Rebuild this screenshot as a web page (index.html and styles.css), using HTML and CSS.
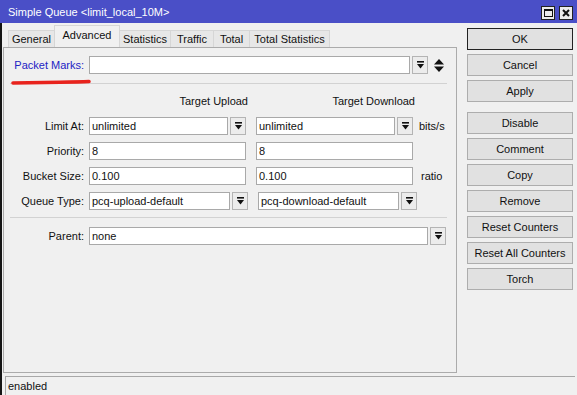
FILE: index.html
```html
<!DOCTYPE html>
<html lang="en">
<head>
    <meta charset="UTF-8">
    <title>Simple Queue</title>
    <link rel="stylesheet" href="styles.css">
</head>
<body>
<div class="window">
    <div class="titlebar">
        <span class="title">Simple Queue &lt;limit_local_10M&gt;</span>
        <div class="wincontrols">
            <span class="wbtn">
                <svg width="9" height="8" viewBox="0 0 9 8"><rect x="0.5" y="0.5" width="8" height="7" fill="none" stroke="#111"/><rect x="0" y="0" width="9" height="2" fill="#111"/></svg>
            </span>
            <span class="wbtn">
                <svg width="8" height="8" viewBox="0 0 8 8"><path d="M1 1 L7 7 M7 1 L1 7" stroke="#111" stroke-width="2"/></svg>
            </span>
        </div>
    </div>

    <div class="frame">
        <div class="main">
            <div class="left">
                <!-- tabs -->
                <div class="tabs">
                    <div class="tab t-general">General</div>
                    <div class="tab active t-advanced">Advanced</div>
                    <div class="tab t-stats">Statistics</div>
                    <div class="tab t-traffic">Traffic</div>
                    <div class="tab t-total">Total</div>
                    <div class="tab t-totalstats">Total Statistics</div>
                </div>

                <div class="panel">
                    <div class="row first">
                        <span class="label link">Packet Marks:</span>
                        <div class="input marks"></div>
                        <span class="dd"><svg width="7" height="8" viewBox="0 0 7 8"><rect x="0" y="0" width="7" height="1.6" fill="#111"/><polygon points="0,3 7,3 3.5,7.5" fill="#111"/></svg></span>
                        <span class="updown"><svg width="10" height="15" viewBox="0 0 10 15"><polygon points="0,6.5 10,6.5 5,1" fill="#111"/><polygon points="0,8.5 10,8.5 5,14" fill="#111"/></svg></span>
                    </div>
                    <svg class="scribble" width="82" height="8" viewBox="0 0 82 8"><path d="M3 5 Q 30 4.5 50 4.2 T 79 3.5" fill="none" stroke="#e8231d" stroke-width="3.6" stroke-linecap="round"/></svg>
                    <div class="sep"></div>

                    <div class="heads">
                        <span class="head">Target Upload</span>
                        <span class="head">Target Download</span>
                    </div>

                    <div class="row">
                        <span class="label">Limit At:</span>
                        <div class="combo">
                            <div class="input">unlimited</div>
                            <span class="dd"><svg width="7" height="8" viewBox="0 0 7 8"><rect x="0" y="0" width="7" height="1.6" fill="#111"/><polygon points="0,3 7,3 3.5,7.5" fill="#111"/></svg></span>
                        </div>
                        <div class="combo">
                            <div class="input">unlimited</div>
                            <span class="dd"><svg width="7" height="8" viewBox="0 0 7 8"><rect x="0" y="0" width="7" height="1.6" fill="#111"/><polygon points="0,3 7,3 3.5,7.5" fill="#111"/></svg></span>
                        </div>
                        <span class="unit">bits/s</span>
                    </div>

                    <div class="row">
                        <span class="label">Priority:</span>
                        <div class="input col">8</div>
                        <div class="input col">8</div>
                    </div>

                    <div class="row">
                        <span class="label">Bucket Size:</span>
                        <div class="input col">0.100</div>
                        <div class="input col">0.100</div>
                        <span class="unit ratio">ratio</span>
                    </div>

                    <div class="row qtype">
                        <span class="label">Queue Type:</span>
                        <div class="combo">
                            <div class="input">pcq-upload-default</div>
                            <span class="dd"><svg width="7" height="8" viewBox="0 0 7 8"><rect x="0" y="0" width="7" height="1.6" fill="#111"/><polygon points="0,3 7,3 3.5,7.5" fill="#111"/></svg></span>
                        </div>
                        <div class="combo">
                            <div class="input">pcq-download-default</div>
                            <span class="dd"><svg width="7" height="8" viewBox="0 0 7 8"><rect x="0" y="0" width="7" height="1.6" fill="#111"/><polygon points="0,3 7,3 3.5,7.5" fill="#111"/></svg></span>
                        </div>
                    </div>

                    <div class="sep sep2"></div>

                    <div class="row parent">
                        <span class="label">Parent:</span>
                        <div class="combo wide">
                            <div class="input">none</div>
                            <span class="dd"><svg width="7" height="8" viewBox="0 0 7 8"><rect x="0" y="0" width="7" height="1.6" fill="#111"/><polygon points="0,3 7,3 3.5,7.5" fill="#111"/></svg></span>
                        </div>
                    </div>
                </div>
            </div>

            <!-- buttons -->
            <div class="buttons">
                <div class="btn default">OK</div>
                <div class="btn">Cancel</div>
                <div class="btn">Apply</div>
                <div class="btn spaced">Disable</div>
                <div class="btn">Comment</div>
                <div class="btn">Copy</div>
                <div class="btn">Remove</div>
                <div class="btn">Reset Counters</div>
                <div class="btn">Reset All Counters</div>
                <div class="btn">Torch</div>
            </div>
        </div>
        <div class="status">enabled</div>
    </div>
</div>
</body>
</html>
```

FILE: styles.css
```css
body{
    margin: 0;
    background-color: #f0f0f0;
    font-family: "Liberation Sans", Arial, sans-serif;
    font-size: 11px;
    color: #111;
}
.window{
    width: 577px;
    height: 395px;
    display: flex;
    flex-direction: column;
    overflow: hidden;
}

/* title bar */
.titlebar{
    height: 23px;
    background-color: #4a4fc7;
    color: white;
    display: flex;
    align-items: center;
    justify-content: space-between;
    padding-left: 8px;
    padding-right: 4px;
}
.wincontrols{
    display: flex;
    gap: 4px;
    padding-top: 2px;
}
.wbtn{
    width: 12px;
    height: 12px;
    border: 1px solid #222;
    background-color: #ececec;
    display: flex;
    align-items: center;
    justify-content: center;
}

.frame{
    flex: 1;
    border-left: 2px solid #151515;
    display: flex;
    flex-direction: column;
}
.main{
    height: 350px;
    display: flex;
}
.left{
    width: 454px;
    margin-left: 1px;
    display: flex;
    flex-direction: column;
}

/* tabs */
.tabs{
    height: 24px;
    display: flex;
    align-items: flex-end;
    padding-left: 5px;
}
.tab{
    height: 16px;
    line-height: 16px;
    text-align: center;
    background-color: #e7e7e7;
    border: 1px solid #d6d6d6;
    border-bottom: none;
    box-sizing: content-box;
    margin-right: -1px;
}
.tab.active{
    height: 21px;
    line-height: 19px;
    background-color: #f0f0f0;
    position: relative;
    z-index: 1;
}
.t-general{ width: 45px; }
.t-advanced{ width: 64px; }
.t-stats{ width: 50px; }
.t-traffic{ width: 42px; }
.t-total{ width: 35px; }
.t-totalstats{ width: 79px; }

/* panel */
.panel{
    flex: 1;
    border: 1px solid #ababab;
    position: relative;
    padding-top: 8px;
}
.row{
    height: 18px;
    display: flex;
    align-items: center;
    gap: 10px;
    margin-bottom: 7px;
}
.label{
    width: 80px;
    text-align: right;
    margin-right: -5px;
}
.link{
    color: #2323c4;
}
.input{
    height: 18px;
    line-height: 16px;
    box-sizing: border-box;
    background-color: white;
    border: 1px solid #a9a9a9;
    padding-left: 2px;
    white-space: nowrap;
    overflow: hidden;
}
.col{
    width: 157px;
}
.marks{
    width: 321px;
    margin-right: -8px;
}
.dd{
    width: 16px;
    height: 18px;
    box-sizing: border-box;
    border: 1px solid #b4b4b4;
    background-color: #ececec;
    display: flex;
    align-items: center;
    justify-content: center;
}
.updown{
    display: flex;
    margin-left: -4px;
}
.combo{
    width: 157px;
    display: flex;
    gap: 2px;
}
.combo .input{
    flex: 1;
}
.qtype .combo{
    width: 159px;
}
.combo.wide{
    width: 357px;
}
.unit{
    margin-left: -4px;
}
.ratio{
    margin-left: -2px;
}
.first{
    margin-bottom: 0;
}
.scribble{
    position: absolute;
    left: 6px;
    top: 30px;
}
.sep{
    height: 1px;
    width: 437px;
    margin-left: 6px;
    margin-top: 9px;
    background-color: #d2d2d2;
}
.sep2{
    margin-top: 0;
}
.heads{
    height: 12px;
    display: flex;
    gap: 8px;
    margin: 11px 0 10px 85px;
}
.head{
    width: 159px;
    text-align: right;
}
.parent{
    margin-top: 9px;
}

/* buttons */
.buttons{
    width: 106px;
    margin-left: 10px;
    padding-top: 5px;
    display: flex;
    flex-direction: column;
    gap: 4px;
}
.btn{
    height: 22px;
    line-height: 20px;
    box-sizing: border-box;
    text-align: center;
    background-color: #e1e1e1;
    border: 1px solid #adadad;
}
.btn.default{
    border-color: #222;
}
.btn.spaced{
    margin-top: 6px;
}

/* status bar */
.status{
    margin-top: 3px;
    margin-left: 3px;
    margin-right: 2px;
    height: 18px;
    line-height: 18px;
    border-top: 1px solid #a8a8a8;
    border-left: 1px solid #a8a8a8;
    padding-left: 2px;
}
```
